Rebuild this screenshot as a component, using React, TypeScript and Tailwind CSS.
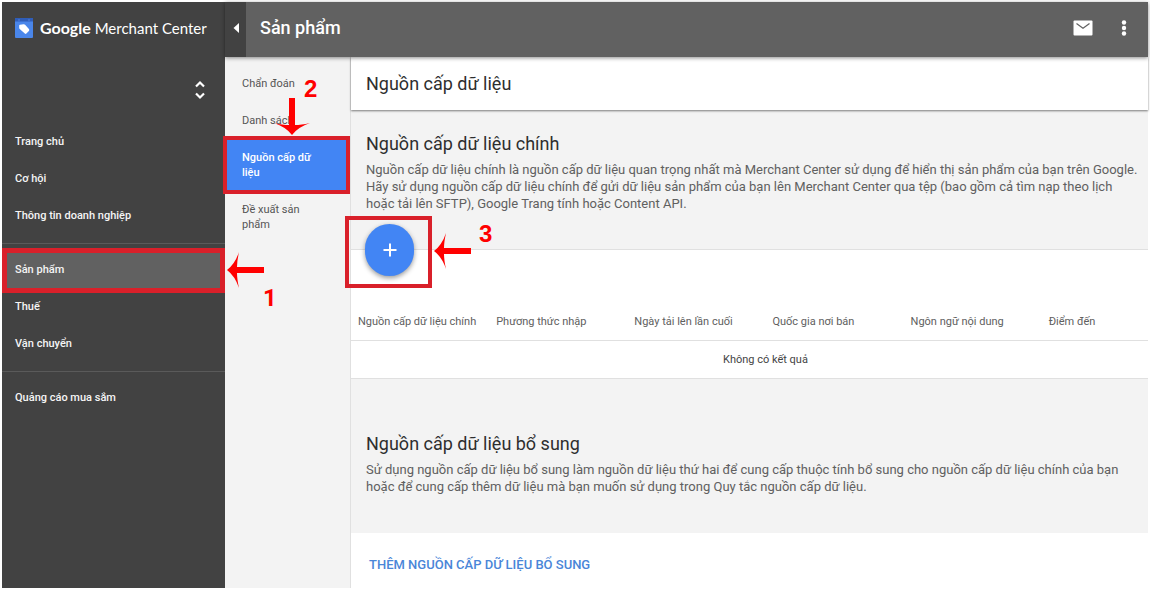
import React from "react";

const primaryNav: string[][] = [
  ["Trang chủ", "Cơ hội", "Thông tin doanh nghiệp"],
  ["Sản phẩm", "Thuế", "Vận chuyển"],
  ["Quảng cáo mua sắm"],
];

const productNav = ["Chẩn đoán", "Danh sách", "Nguồn cấp dữ liệu", "Đề xuất sản phẩm"];

const columns = [
  "Nguồn cấp dữ liệu chính",
  "Phương thức nhập",
  "Ngày tải lên lần cuối",
  "Quốc gia nơi bán",
  "Ngôn ngữ nội dung",
  "Điểm đến",
];

function Logo() {
  return (
    <svg viewBox="0 0 20 22" className="h-[22px] w-5 shrink-0" aria-hidden="true">
      <rect x="1" y="1" width="18" height="20" rx="1" fill="#4a86ea" />
      <rect x="1" y="1" width="18" height="3.5" fill="#2f5db8" />
      <circle cx="5" cy="3" r="0.7" fill="#5c8de8" />
      <circle cx="15" cy="3" r="0.7" fill="#5c8de8" />
      <path d="M5.2 8.600 Q5.200 7.800 6 7.700 L9.600 7.200 Q10.500 7.100 11.100 7.700 L14.900 12.100 Q15.700 13 14.900 13.900 L12.400 16.600 Q11.600 17.400 10.800 16.600 L5.700 11.900 Q5.200 11.400 5.200 10.700 Z" fill="#fff" />
    </svg>
  );
}

function ArrowLeft({ className }: { className: string }) {
  return (
    <svg viewBox="0 0 37 36" className={`absolute z-20 h-9 w-[37px] ${className}`} aria-hidden="true">
      <path d="M0 18 Q8 12 12 0 Q10 9 10 15 H37 V21 H10 Q10 27 12 36 Q8 24 0 18 Z" fill="#f00" />
    </svg>
  );
}

function ArrowDown({ className }: { className: string }) {
  return (
    <svg viewBox="0 0 36 37" className={`absolute z-20 h-[37px] w-9 ${className}`} aria-hidden="true">
      <path d="M18 37 Q12 29 0 25 Q9 27 15 27 V0 H21 V27 Q27 27 36 25 Q24 29 18 37 Z" fill="#f00" />
    </svg>
  );
}

function Step({ n, className }: { n: number; className: string }) {
  return (
    <span className={`absolute z-20 text-2xl leading-6 font-bold text-[#f00] ${className}`}>
      {n}
    </span>
  );
}

function Sidebar() {
  return (
    <aside className="flex w-[223px] shrink-0 flex-col bg-[#424242] text-[#f5f5f5]">
      <div className="flex h-[55px] items-center gap-1.5 pb-1 pl-3">
        <Logo />
        <span className="font-['Lato',sans-serif] text-[15px] whitespace-nowrap text-white">
          <span className="text-base font-bold">Google</span> <span>Merchant Center</span>
        </span>
      </div>
      <div className="flex h-[67px] items-center justify-end pr-[19px] pb-0.5">
        <button type="button" aria-label="Chuyển tài khoản">
          <svg viewBox="0 0 12 20" className="h-5 w-3" fill="none" stroke="#fff" strokeWidth="2.2">
            <path d="M2 6.500 L6 2.500 L10 6.500 M2 13.500 L6 17.500 L10 13.500" />
          </svg>
        </button>
      </div>
      <nav>
        {primaryNav.map((group, i) => (
          <ul key={group[0]} className={i > 0 ? "mt-2 border-t border-[#5a5a5a] pt-2" : ""}>
            {group.map((label) => {
              const active = label === "Sản phẩm";
              return (
                <li key={label} className="relative">
                  <a
                    href="#"
                    aria-current={active ? "page" : undefined}
                    className={`flex h-[37px] items-center pl-[13px] text-[11px] font-medium ${active ? "bg-[#616161]" : ""}`}
                  >
                    {label}
                  </a>
                  {active && (
                    <>
                      <span className="absolute -inset-y-1 inset-x-0 z-10 border-5 border-[#d9202a]" />
                      <ArrowLeft className="top-0 left-[225px]" />
                      <Step n={1} className="top-[34px] left-[261px] font-['Roboto',sans-serif]" />
                    </>
                  )}
                </li>
              );
            })}
          </ul>
        ))}
      </nav>
    </aside>
  );
}

function ProductNav() {
  return (
    <nav className="w-[126px] shrink-0 border-r border-[#e0e0e0] bg-[#f3f3f3] pt-2">
      <ul>
        {productNav.map((label) => {
          const active = label === "Nguồn cấp dữ liệu";
          return (
            <li key={label} className="relative">
              <a
                href="#"
                aria-current={active ? "page" : undefined}
                className={`block py-[11px] pr-8 pl-[17px] text-[11px] leading-[15px] ${
                  active ? "bg-[#4285f4] font-medium text-white" : "text-[#555555]"
                }`}
              >
                {label}
              </a>
              {active && (
                <>
                  <span className="absolute -inset-y-[3px] right-0 -left-0.5 z-10 border-4 border-[#d9202a]" />
                  <ArrowDown className="-top-[41px] left-[49px]" />
                  <Step n={2} className="-top-[62px] left-[79px] font-['Liberation_Sans',sans-serif]" />
                </>
              )}
            </li>
          );
        })}
      </ul>
    </nav>
  );
}

function Header() {
  return (
    <header className="relative z-20 flex h-[55px] shrink-0 items-stretch bg-[#616161] text-white shadow-[0_1px_4px_rgba(0,0,0,0.45)]">
      <button type="button" aria-label="Thu gọn trình đơn" className="flex w-[21px] items-center justify-center bg-[#424242] pb-1">
        <svg viewBox="0 0 6 10" className="h-2.5 w-1.5" fill="#fff">
          <path d="M6 0 V10 L0.500 5 Z" />
        </svg>
      </button>
      <div className="flex flex-1 items-center pb-1">
        <h1 className="flex-1 pl-3.5 text-lg font-medium">Sản phẩm</h1>
        <button type="button" aria-label="Thư" className="mr-7">
          <svg viewBox="0 0 20 16" className="h-4 w-5">
            <rect x="0.500" y="0.500" width="19" height="15" rx="1" fill="#fff" />
            <path d="M3.500 3.500 L10 8.300 L16.500 3.500" fill="none" stroke="#616161" strokeWidth="1.200" />
          </svg>
        </button>
        <button type="button" aria-label="Tùy chọn khác" className="mr-[21px]">
          <svg viewBox="0 0 6 18" className="h-[18px] w-1.5" fill="#fff">
            <circle cx="3" cy="3.500" r="2.200" />
            <circle cx="3" cy="9" r="2.200" />
            <circle cx="3" cy="14.500" r="2.200" />
          </svg>
        </button>
      </div>
    </header>
  );
}

function Feeds() {
  return (
    <main className="flex min-w-0 flex-1 flex-col bg-white">
      <h2 className="relative z-10 flex h-[53px] items-center bg-white pl-[15px] text-lg text-[#2e2e2e] shadow-[0_1px_2px_rgba(0,0,0,0.5)]">
        Nguồn cấp dữ liệu
      </h2>

      <section>
        <div className="relative h-[140px] border-b border-[#e0e0e0] bg-[#f3f3f3] pt-[22px] pr-1.5 pl-[15px]">
          <h3 className="text-lg leading-6 text-[#2e2e2e]">Nguồn cấp dữ liệu chính</h3>
          <p className="mt-[5px] text-[13px] leading-[17px] text-[#606060]">
            Nguồn cấp dữ liệu chính là nguồn cấp dữ liệu quan trọng nhất mà Merchant Center sử dụng để hiển thị sản phẩm
            của bạn trên Google. Hãy sử dụng nguồn cấp dữ liệu chính để gửi dữ liệu sản phẩm của bạn lên Merchant Center
            qua tệp (bao gồm cả tìm nạp theo lịch hoặc tải lên SFTP), Google Trang tính hoặc Content API.
          </p>
          <div className="absolute -bottom-[39px] -left-1.5 z-20 flex h-[72px] w-[87px] items-center justify-center border-4 border-[#d9202a] pb-1 pl-0.5">
            <button
              type="button"
              aria-label="Thêm nguồn cấp dữ liệu chính"
              className="flex h-[52px] w-[49px] items-center justify-center rounded-full bg-[#4285f4] shadow-[0_2px_5px_rgba(0,0,0,0.4)]"
            >
              <svg viewBox="0 0 14 14" className="size-3.5" stroke="#fff" strokeWidth="2">
                <path d="M7 0.500 V13.500 M0.500 7 H13.500" />
              </svg>
            </button>
            <ArrowLeft className="top-[13px] left-[85px]" />
            <Step n={3} className="top-0.5 left-[130px] font-['Liberation_Sans',sans-serif]" />
          </div>
        </div>
        <div className="overflow-hidden pt-[52px]">
          <table className="w-[104%] table-fixed text-left text-[#606060]">
            <thead>
              <tr className="h-[38px] border-b border-[#e0e0e0]">
                {columns.map((c) => (
                  <th key={c} scope="col" className="pt-0.5 pl-[7px] text-[11px] font-normal whitespace-nowrap">
                    {c}
                  </th>
                ))}
              </tr>
            </thead>
            <tbody>
              <tr className="h-[38px] border-b border-[#e0e0e0]">
                <td colSpan={6} className="pt-0.5 text-center text-[11px] text-[#444444]">
                  Không có kết quả
                </td>
              </tr>
            </tbody>
          </table>
        </div>
      </section>

      <section>
        <div className="h-[154px] bg-[#f3f3f3] pt-[53px] pr-1.5 pl-[15px]">
          <h3 className="text-lg leading-6 text-[#2e2e2e]">Nguồn cấp dữ liệu bổ sung</h3>
          <p className="mt-[5px] text-[13px] leading-[17px] text-[#606060]">
            Sử dụng nguồn cấp dữ liệu bổ sung làm nguồn dữ liệu thứ hai để cung cấp thuộc tính bổ sung cho nguồn cấp dữ
            liệu chính của bạn hoặc để cung cấp thêm dữ liệu mà bạn muốn sử dụng trong Quy tắc nguồn cấp dữ liệu.
          </p>
        </div>
        <button type="button" className="mt-5 ml-[18px] text-[13px] leading-6 font-medium text-[#4a86d8]">
          THÊM NGUỒN CẤP DỮ LIỆU BỔ SUNG
        </button>
      </section>
    </main>
  );
}

export default function App() {
  return (
    <div className="flex min-h-screen bg-white p-0.5 font-['Roboto',sans-serif]">
      <Sidebar />
      <div className="flex min-w-0 flex-1 flex-col">
        <Header />
        <div className="flex flex-1">
          <ProductNav />
          <Feeds />
        </div>
      </div>
    </div>
  );
}
